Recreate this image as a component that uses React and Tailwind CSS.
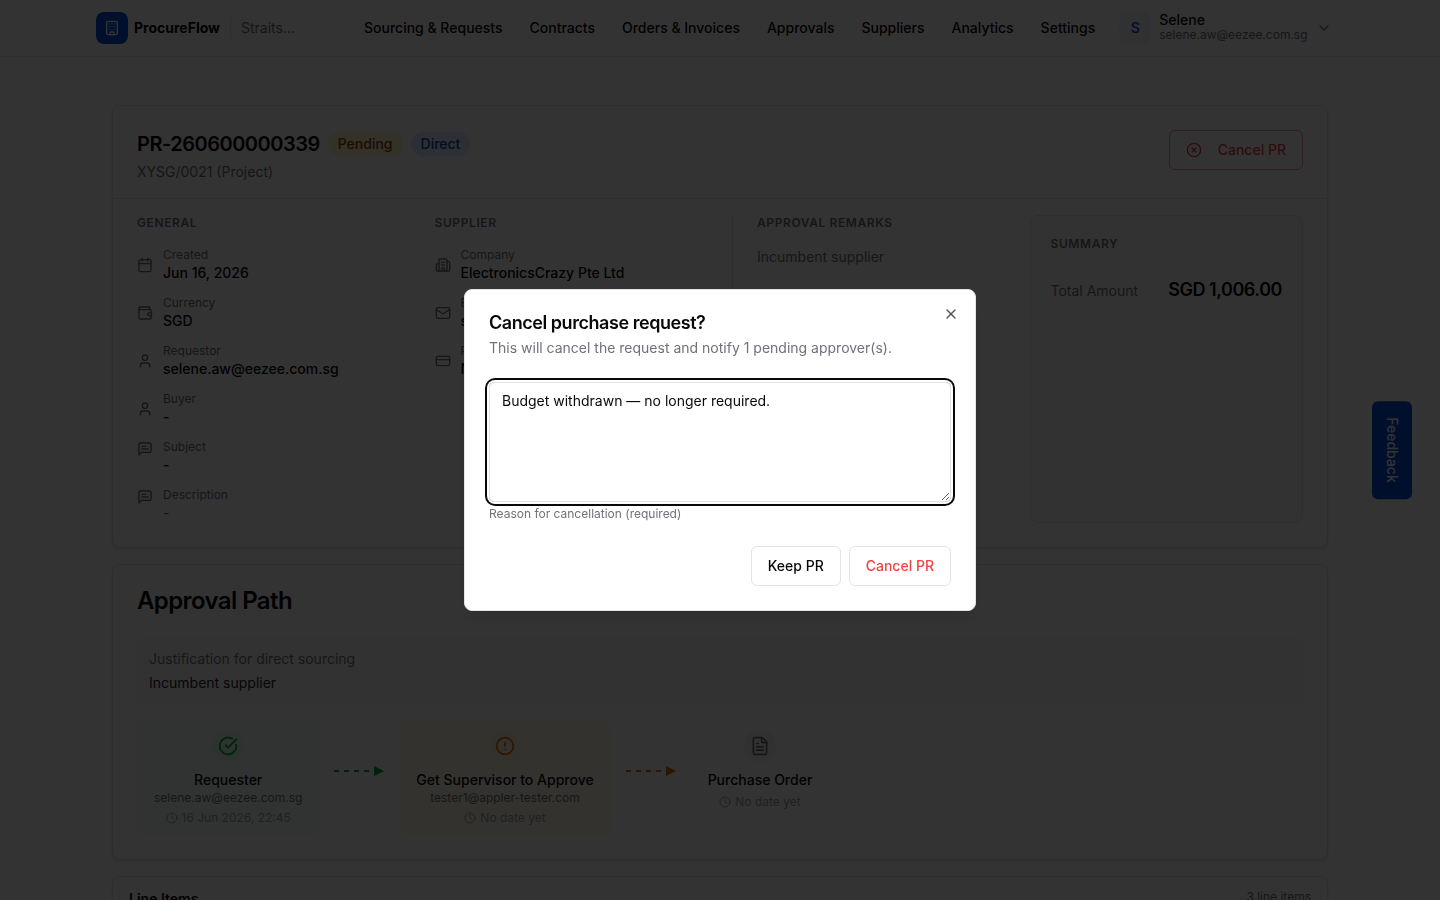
import React, { useState } from "react";
import {
  Building,
  Building2,
  Calendar,
  ChevronDown,
  CircleAlert,
  CircleCheckBig,
  CircleX,
  Clock,
  CreditCard,
  FileText,
  Mail,
  User,
  Wallet,
  X,
} from "lucide-react";

const navItems = [
  "Sourcing & Requests",
  "Contracts",
  "Orders & Invoices",
  "Approvals",
  "Suppliers",
  "Analytics",
  "Settings",
];

const general = [
  { icon: Calendar, label: "Created", value: "Jun 16, 2026" },
  { icon: Wallet, label: "Currency", value: "SGD" },
  { icon: User, label: "Requestor", value: "selene.aw@eezee.com.sg" },
  { icon: User, label: "Buyer", value: "-" },
  { icon: MessageIcon, label: "Subject", value: "-", top: true },
  { icon: MessageIcon, label: "Description", value: "-", top: true, muted: true },
];

const supplier = [
  { icon: Building2, label: "Company", value: "ElectronicsCrazy Pte Ltd" },
  { icon: Mail, label: "Email", value: "sales@electronicscrazy.sg" },
  { icon: CreditCard, label: "Payment Terms", value: "Net 30" },
];

function MessageIcon({ className }) {
  return (
    <svg
      className={className}
      viewBox="0 0 24 24"
      fill="none"
      stroke="currentColor"
      strokeWidth="2"
      strokeLinecap="round"
      strokeLinejoin="round"
      aria-hidden="true"
    >
      <path d="M21 15a2 2 0 0 1-2 2H7l-4 4V5a2 2 0 0 1 2-2h14a2 2 0 0 1 2 2z" />
      <path d="M13 8H7" />
      <path d="M17 12H7" />
    </svg>
  );
}

function Header() {
  return (
    <header className="border-b border-zinc-200 bg-white">
      <div className="mx-auto flex h-14 max-w-7xl items-center px-4">
        <a href="#" className="flex items-center gap-1.5">
          <span className="flex h-8 w-8 items-center justify-center rounded-lg bg-[#0052d9] text-white">
            <Building className="h-4 w-4" />
          </span>
          <span className="text-sm font-bold">ProcureFlow</span>
        </a>
        <span className="ml-2.5 h-5 border-l border-zinc-200" />
        <span className="ml-2.5 w-[67px] text-sm text-zinc-500">Straits...</span>
        <nav className="ml-14 flex items-center gap-[27px]">
          {navItems.map((item) => (
            <a key={item} href="#" className="text-sm font-medium whitespace-nowrap">
              {item}
            </a>
          ))}
        </nav>
        <button type="button" className="ml-6 flex items-center gap-2 text-left">
          <span className="flex h-8 w-8 items-center justify-center rounded-lg bg-blue-50 text-sm font-semibold text-[#0052d9]">
            S
          </span>
          <span>
            <span className="block text-sm leading-none font-medium">Selene</span>
            <span className="block text-xs text-zinc-500">selene.aw@eezee.com.sg</span>
          </span>
          <ChevronDown className="h-4 w-4 text-zinc-500" />
        </button>
      </div>
    </header>
  );
}

function SectionTitle({ children }) {
  return (
    <h3 className="text-xs font-semibold tracking-wider text-zinc-500 uppercase">{children}</h3>
  );
}

function Details({ title, items }) {
  return (
    <div>
      <SectionTitle>{title}</SectionTitle>
      <dl className="mt-4 space-y-3">
        {items.map(({ icon: Icon, label, value, top, muted }) => (
          <div key={label} className={top ? "flex items-start gap-2.5" : "flex items-center gap-2.5"}>
            <Icon
              className={top ? "mt-0.5 h-4 w-4 shrink-0 text-zinc-500" : "h-4 w-4 shrink-0 text-zinc-500"}
            />
            <div>
              <dt className="text-xs text-zinc-500">{label}</dt>
              <dd className={muted ? "text-sm text-zinc-500" : "text-sm font-medium"}>{value}</dd>
            </div>
          </div>
        ))}
      </dl>
    </div>
  );
}

function RequestCard({ onCancel }) {
  return (
    <section className="rounded-lg border border-zinc-200 bg-white shadow-sm">
      <div className="flex items-start justify-between border-b border-zinc-200 px-6 pt-6 pb-4">
        <div>
          <div className="flex items-center gap-2">
            <h1 className="text-xl font-semibold tracking-tight">PR-260600000339</h1>
            <span className="rounded-full bg-amber-100 px-2.5 py-0.5 text-sm font-medium text-amber-800">
              Pending
            </span>
            <span className="rounded-full bg-blue-100 px-2.5 py-0.5 text-sm font-medium text-blue-800">
              Direct
            </span>
          </div>
          <p className="mt-1 text-sm text-zinc-500">XYSG/0021 (Project)</p>
        </div>
        <button
          type="button"
          onClick={onCancel}
          className="flex h-10 items-center gap-4 rounded-md border border-[#ef4444]/60 px-4 text-sm font-medium text-[#ef4444]"
        >
          <CircleX className="h-4 w-4" />
          Cancel PR
        </button>
      </div>
      <div className="grid grid-cols-4 gap-6 px-6 pt-4 pb-6">
        <Details title="General" items={general} />
        <Details title="Supplier" items={supplier} />
        <div className="border-l border-zinc-200 pl-6">
          <SectionTitle>Approval Remarks</SectionTitle>
          <p className="mt-4 text-sm text-zinc-500">Incumbent supplier</p>
        </div>
        <div className="rounded-lg border border-zinc-200 bg-zinc-50 p-5">
          <SectionTitle>Summary</SectionTitle>
          <div className="mt-6 flex items-baseline justify-between">
            <span className="text-sm text-zinc-500">Total Amount</span>
            <span className="text-lg font-semibold tracking-tight">SGD 1,006.00</span>
          </div>
        </div>
      </div>
    </section>
  );
}

function Step({ icon: Icon, box, circle, title, email, date }) {
  return (
    <li className={`flex flex-col items-center rounded-lg border border-transparent px-4 py-2 ${box}`}>
      <span className={`flex h-8 w-8 items-center justify-center rounded-full ${circle}`}>
        <Icon className="h-5 w-5" />
      </span>
      <span className="mt-2 text-sm font-medium">{title}</span>
      {email && <span className="text-xs text-zinc-500">{email}</span>}
      <span className="mt-1 flex items-center gap-1 text-xs text-zinc-400">
        <Clock className="h-3 w-3" />
        {date}
      </span>
    </li>
  );
}

function Arrow({ color }) {
  return (
    <li aria-hidden="true" className={`mx-[15px] mt-11 ${color}`}>
      <svg width="50" height="12" viewBox="0 0 50 12">
        <path d="M0 6h36" stroke="currentColor" strokeWidth="2" strokeDasharray="5 5" />
        <path d="M40 1l10 5-10 5z" fill="currentColor" />
      </svg>
    </li>
  );
}

function ApprovalPath() {
  return (
    <section className="rounded-lg border border-zinc-200 bg-white p-6 shadow-sm">
      <h2 className="text-2xl leading-6 font-semibold tracking-tight">Approval Path</h2>
      <div className="mt-6 space-y-1 rounded-md bg-zinc-50 p-3 text-sm">
        <p className="text-zinc-500">Justification for direct sourcing</p>
        <p className="text-zinc-800">Incumbent supplier</p>
      </div>
      <ol className="mt-4 flex items-start">
        <Step
          icon={CircleCheckBig}
          box="bg-emerald-50/60"
          circle="bg-green-100/60 text-green-600"
          title="Requester"
          email="selene.aw@eezee.com.sg"
          date="16 Jun 2026, 22:45"
        />
        <Arrow color="text-green-600" />
        <Step
          icon={CircleAlert}
          box="bg-amber-50"
          circle="bg-amber-100/60 text-amber-600"
          title="Get Supervisor to Approve"
          email="tester1@appler-tester.com"
          date="No date yet"
        />
        <Arrow color="text-amber-600" />
        <Step
          icon={FileText}
          box="bg-white"
          circle="bg-zinc-100 text-zinc-500"
          title="Purchase Order"
          date="No date yet"
        />
      </ol>
    </section>
  );
}

function CancelDialog({ onClose }) {
  const [reason, setReason] = useState("Budget withdrawn — no longer required.");

  return (
    <div className="fixed inset-0 flex items-center justify-center bg-black/80">
      <div
        role="dialog"
        aria-modal="true"
        aria-labelledby="cancel-title"
        className="relative w-full max-w-lg rounded-lg border border-zinc-200 bg-white p-6 shadow-lg"
      >
        <h2 id="cancel-title" className="text-lg leading-none font-semibold tracking-tight">
          Cancel purchase request?
        </h2>
        <p className="mt-1.5 text-sm text-zinc-500">
          This will cancel the request and notify 1 pending approver(s).
        </p>
        <textarea
          id="reason"
          value={reason}
          onChange={(e) => setReason(e.target.value)}
          className="mt-6 block h-[120px] w-full rounded-md border border-zinc-200 px-3 py-2 text-sm ring-2 ring-zinc-950 ring-offset-2 outline-none"
        />
        <label htmlFor="reason" className="mt-1 block text-xs text-zinc-500">
          Reason for cancellation (required)
        </label>
        <div className="mt-6 flex justify-end gap-2">
          <button
            type="button"
            onClick={onClose}
            className="h-10 rounded-md border border-zinc-200 px-4 text-sm font-medium"
          >
            Keep PR
          </button>
          <button
            type="button"
            disabled={!reason.trim()}
            className="h-10 rounded-md border border-zinc-200 px-4 text-sm font-medium text-[#ef4444]"
          >
            Cancel PR
          </button>
        </div>
        <button type="button" aria-label="Close" onClick={onClose} className="absolute top-4 right-4 opacity-70">
          <X className="h-4 w-4" />
        </button>
      </div>
    </div>
  );
}

export default function App() {
  const [open, setOpen] = useState(true);

  return (
    <div className="h-screen overflow-hidden bg-white font-[Inter,sans-serif] text-zinc-950">
      <Header />
      <main className="mx-auto max-w-7xl space-y-4 px-8 pt-12">
        <RequestCard onCancel={() => setOpen(true)} />
        <ApprovalPath />
        <section className="rounded-lg border border-zinc-200 bg-white px-4 py-3 shadow-sm">
          <div className="flex items-start justify-between">
            <h2 className="text-sm font-semibold">Line Items</h2>
            <span className="text-xs text-zinc-500">3 line items</span>
          </div>
        </section>
      </main>
      <button
        type="button"
        className="fixed top-1/2 right-7 -translate-y-1/2 rounded-md bg-[#0052d9] px-4 py-2.5 text-sm font-medium text-white [writing-mode:vertical-rl]"
      >
        Feedback
      </button>
      {open && <CancelDialog onClose={() => setOpen(false)} />}
    </div>
  );
}
